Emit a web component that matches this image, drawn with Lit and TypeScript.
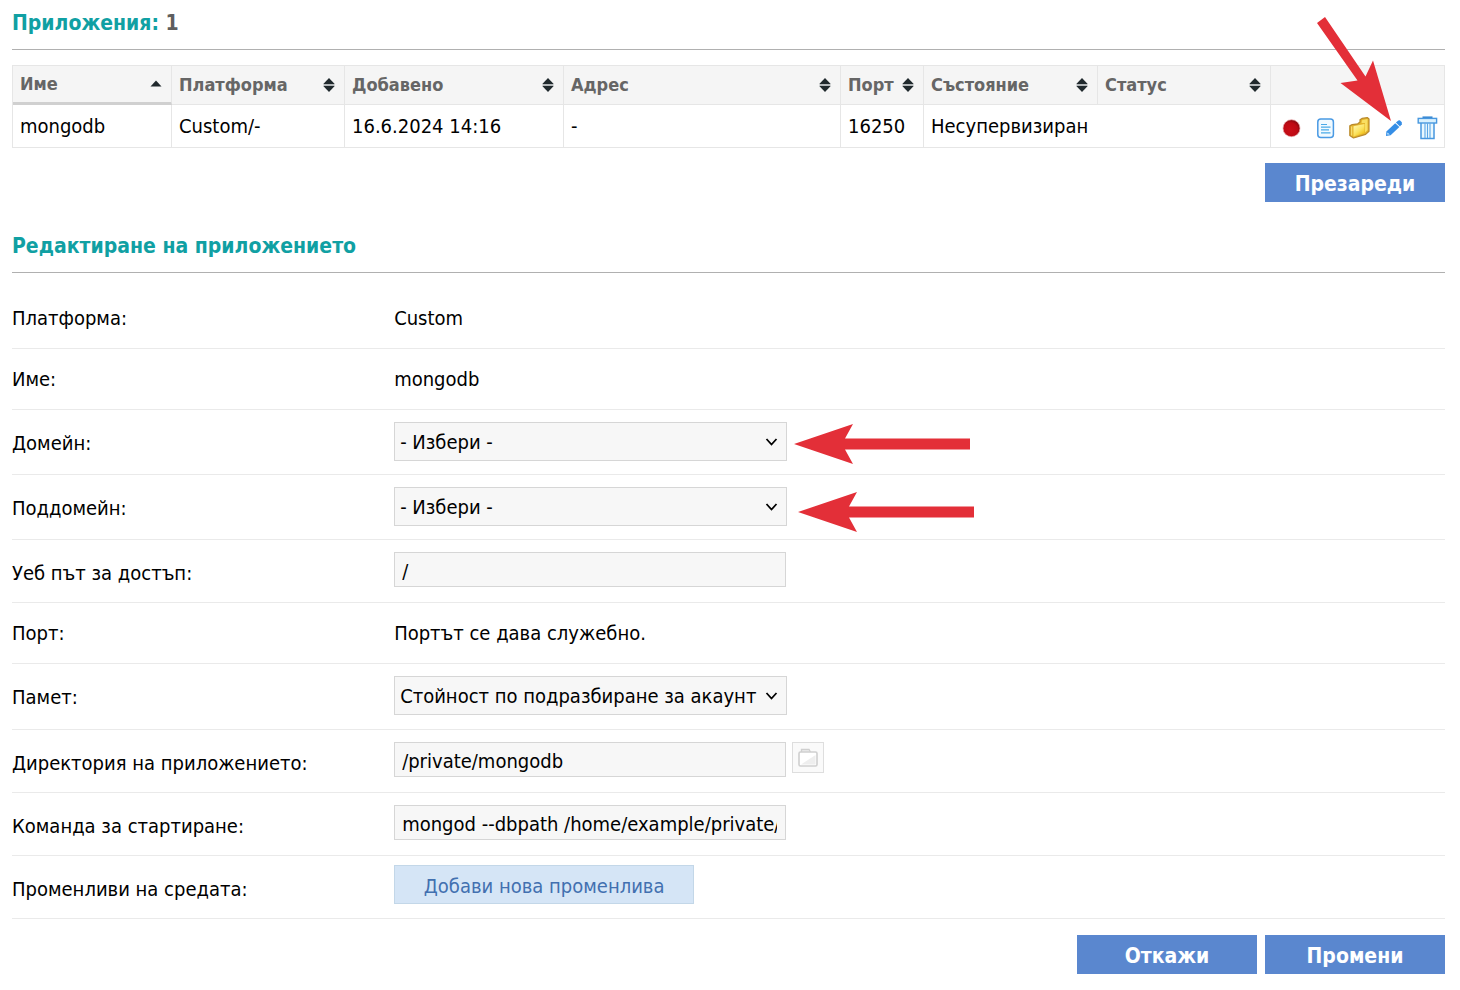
import { LitElement, html, svg, css, nothing } from "lit";
import { customElement, property } from "lit/decorators.js";

type SortState = "asc" | "both" | "none";

const COLUMNS: { label: string; width: number; sort: SortState }[] = [
  { label: "Име", width: 159, sort: "asc" },
  { label: "Платформа", width: 173, sort: "both" },
  { label: "Добавено", width: 219, sort: "both" },
  { label: "Адрес", width: 277, sort: "both" },
  { label: "Порт", width: 83, sort: "both" },
  { label: "Състояние", width: 174, sort: "both" },
  { label: "Статус", width: 173, sort: "both" },
];

/* Small sort marker in a table header. */
@customElement("sort-mark")
export class SortMark extends LitElement {
  @property() state: SortState = "both";

  static styles = css`
    :host { display: block; flex: none; }
    .mark { display: block; }
  `;

  render() {
    return html`<svg class="mark" width="12" height="14" viewBox="0 0 12 14" aria-hidden="true">
      ${this.state === "asc"
        ? svg`<path d="M0.5 9.5 6 3.5 11.5 9.5Z" fill="#20292d" />`
        : svg`<path d="M0.3 6 6 0 11.7 6Z" fill="#20292d" />
            <path d="M0.3 8 6 14 11.7 8Z" fill="#20292d" />
            <path d="M0.5 6H11.5V8H0.5Z" fill="#b4b8ba" />`}
    </svg>`;
  }
}

/* Red pointer drawn over the page; its tip lies at the box's left edge or lower right corner. */
@customElement("red-arrow")
export class RedArrow extends LitElement {
  @property() direction: "left" | "down" = "left";

  static styles = css`
    :host { display: block; pointer-events: none; }
    .arrow { display: block; fill: #e32f38; }
  `;

  render() {
    return this.direction === "left"
      ? html`<svg class="arrow" width="178" height="42" viewBox="0 0 178 42" aria-hidden="true">
          <path d="M0 21 59 1 51 15.5H176V26.5H51L59 41Z" />
        </svg>`
      : html`<svg class="arrow" width="76" height="106" viewBox="0 0 76 106" aria-hidden="true">
          <path d="M75 105 24.5 67 41.5 64.5 1 7 9 1 49.5 60.5 57 44.5Z" />
        </svg>`;
  }
}

@customElement("app-root")
export class AppRoot extends LitElement {
  static styles = css`
    :host {
      display: block;
      box-sizing: border-box;
      padding: 9px 15px 16px 12px;
      background: #fff;
      color: #000;
      font: 20px/28px "DejaVu Sans Condensed", "Noto Sans", sans-serif;
    }
    * { box-sizing: border-box; }
    .title {
      margin: 0;
      padding-bottom: 12px;
      border-bottom: 1px solid #b0b0b0;
      color: #10a0a3;
      font-size: 21px;
      line-height: 28px;
      font-weight: 700;
    }
    .count { color: #5e5e5e; }

    .apps {
      width: 100%;
      margin-top: 15px;
      border-collapse: separate;
      border-spacing: 0;
      border: 1px solid #e6e6e6;
      border-width: 1px 0 0 1px;
      table-layout: fixed;
    }
    .head, .cell {
      padding: 0 9px 0 7px;
      border: 1px solid #e6e6e6;
      border-width: 0 1px 1px 0;
      text-align: left;
      white-space: nowrap;
    }
    .head {
      height: 39px;
      background: #f5f5f5;
      color: #666;
      font-size: 18px;
      line-height: 24px;
      font-weight: 700;
    }
    .head.sorted { border-bottom: 3px solid #d0d0d0; }
    .headline { display: flex; align-items: center; justify-content: space-between; }
    .cell { height: 43px; }
    .tools-cell { padding: 4px 0 0 3px; }
    .tools { display: grid; grid-template-columns: repeat(5, 1fr); align-items: center; justify-items: center; }
    .tool {
      position: relative;
      display: block;
      padding: 0;
      border: 0;
      background: none;
      cursor: pointer;
    }
    .icon { display: block; }
    .point-edit { position: absolute; right: 12px; bottom: 18px; }

    .bar { display: flex; justify-content: flex-end; gap: 8px; }
    .bar.reload { padding: 15px 0 30px; }
    .bar.submit { padding-top: 16px; }
    .button {
      width: 180px;
      height: 39px;
      padding: 2px 0 0;
      border: 0;
      border-radius: 0;
      background: #5a87cf;
      color: #fff;
      font: inherit;
      font-size: 21px;
      font-weight: 700;
      cursor: pointer;
    }

    .form { margin: 0; padding-top: 15px; }
    .row {
      display: grid;
      grid-template-columns: 4fr 11fr;
      align-items: start;
      padding: 12px 0 15px;
      border-bottom: 1px solid #eaeaea;
    }
    .row.text { padding: 16px 0; }
    .row.pick { padding-bottom: 13px; }
    .row.pick.tall { padding-bottom: 14px; }
    .row.action { padding: 9px 0 14px; }
    .label { padding-top: 8px; line-height: 27px; }
    .row.text .label { padding-top: 0; line-height: 28px; }
    .row.action .label { padding-top: 11px; }
    .field { display: flex; align-items: flex-start; gap: 6px; }
    .picker, .box { position: relative; width: 393px; max-width: 100%; }
    .select, .input {
      display: block;
      width: 100%;
      margin: 0;
      border: 1px solid #d6d6d6;
      border-radius: 0;
      background: #f7f7f7;
      color: #000;
      font: inherit;
    }
    .select { height: 39px; padding: 0 26px 0 5px; appearance: none; }
    .input { height: 35px; padding: 2px 8px 0 7px; }
    .box { width: 392px; }
    .chevron { position: absolute; right: 9px; top: 15px; pointer-events: none; }
    .point-field { position: absolute; left: 400px; top: 1px; }
    .point-field.low { left: 404px; top: 4px; }
    .browse {
      width: 32px;
      height: 31px;
      padding: 0 0 0 5px;
      border: 1px solid #dedede;
      background: #fafafa;
    }
    .add {
      width: 300px;
      height: 39px;
      padding: 3px 0 0;
      border: 1px solid #c3d7e8;
      background: #d5e5f6;
      color: #4270b0;
      font: inherit;
      cursor: pointer;
    }
  `;

  private select(id: string, text: string, arrow: "" | "high" | "low" = "") {
    return html`<span class="picker">
      <select class="select" id=${id} name=${id}><option>${text}</option></select>
      <svg class="chevron" width="13" height="10" viewBox="0 0 13 10" aria-hidden="true">
        <path d="M1.5 2 6.5 7.5 11.5 2" fill="none" stroke="#000" stroke-width="1.8" />
      </svg>
      ${arrow ? html`<red-arrow class="point-field ${arrow}" direction="left"></red-arrow>` : nothing}
    </span>`;
  }

  private input(id: string, value: string) {
    return html`<span class="box"><input class="input" type="text" id=${id} name=${id} .value=${value} /></span>`;
  }

  private row(kind: string, id: string, label: string, content: unknown) {
    return html`<div class="row ${kind}">
      ${kind === "text"
        ? html`<span class="label">${label}</span>`
        : html`<label class="label" for=${id}>${label}</label>`}
      <div class="field">${content}</div>
    </div>`;
  }

  private tools() {
    return html`<div class="tools">
      <button class="tool" type="button" aria-label="Състояние">
        <svg class="icon" width="20" height="24" viewBox="0 0 20 24">
          <defs>
            <radialGradient id="lamp" cx=".42" cy=".6" r=".6">
              <stop offset="0" stop-color="#cb0e18" />
              <stop offset=".7" stop-color="#bd0a14" />
              <stop offset="1" stop-color="#850a10" />
            </radialGradient>
          </defs>
          <circle cx="10.5" cy="12.2" r="8.5" fill="url(#lamp)" stroke="#eba9ad" stroke-width=".7" />
        </svg>
      </button>
      <button class="tool" type="button" aria-label="Дневник">
        <svg class="icon" width="20" height="24" viewBox="0 0 20 24">
          <rect x="2.8" y="3" width="15.6" height="18.4" rx="3" fill="#f1faff" stroke="#4a9ae4" stroke-width="1.5" />
          <path d="M6 8.5h6M6 11.2h9.5M6 13.9h8M6 16.8h9.5" stroke="#4aaae8" stroke-width="1.2" />
        </svg>
      </button>
      <button class="tool" type="button" aria-label="Файлове">
        <svg class="icon" width="22" height="24" viewBox="0 0 22 24">
          <defs>
            <linearGradient id="folder" x1="0" y1="0" x2=".7" y2="1">
              <stop offset="0" stop-color="#fff9b8" />
              <stop offset=".6" stop-color="#fbe360" />
              <stop offset="1" stop-color="#f0bd10" />
            </linearGradient>
          </defs>
          <path d="M1.8 19.5V9.8L4.2 8.6 9.8 7.8 12 6V3.8L14 2.4 19.5 1.6 21 3V15.2L17.6 18.4 5.5 22Z" fill="#e5b52c" stroke="#b98a2c" stroke-width="1.2" stroke-linejoin="round" />
          <path d="M13.5 7 14 4.2 19.5 3V14L17 16.5V7Z" fill="#f9df62" />
          <path d="M5.5 10.2 16.5 8V17L5.5 20.6Z" fill="url(#folder)" />
          <path d="M3.6 10.6V19.6" stroke="#f7dc6c" stroke-width="1.2" />
        </svg>
      </button>
      <button class="tool" type="button" aria-label="Редактиране">
        <svg class="icon" width="22" height="24" viewBox="0 0 22 24">
          <path d="M4 20 4.4 15.6 13.2 7.2 17.4 11 8.6 19.2Z" fill="#358ee6" />
          <path d="M13.9 6.6 16.3 4.4 17.8 4.3 19.8 6.3V8.3L18 10.4Z" fill="#358ee6" />
          <path d="M5.2 18.6 5.4 16.6 7.8 18.4Z" fill="#cceeff" />
        </svg>
        <red-arrow class="point-edit" direction="down"></red-arrow>
      </button>
      <button class="tool" type="button" aria-label="Изтриване">
        <svg class="icon" width="22" height="26" viewBox="0 0 22 26">
          <path d="M5 8V23.5H18V8" fill="#eaf8fe" stroke="#4797df" stroke-width="1.5" />
          <path d="M9 8.5V23M11.5 8.5V23M14 8.5V23" stroke="#5ba6e6" stroke-width="1.1" />
          <rect x="2.2" y="3.4" width="18.4" height="4.6" fill="#d9f1fe" stroke="#4797df" stroke-width="1.4" />
          <path d="M6.5 2.2H16.5" stroke="#3c8bd4" stroke-width="1.6" />
        </svg>
      </button>
    </div>`;
  }

  render() {
    return html`
      <h2 class="title">Приложения: <span class="count">1</span></h2>
      <table class="apps">
        <colgroup>
          ${COLUMNS.map((c) => html`<col width=${c.width} />`)}
          <col width="174" />
        </colgroup>
        <thead>
          <tr>
            ${COLUMNS.map(
              (c) => html`<th class="head ${c.sort === "asc" ? "sorted" : ""}" scope="col">
                <div class="headline"><span>${c.label}</span><sort-mark .state=${c.sort}></sort-mark></div>
              </th>`
            )}
            <th class="head"></th>
          </tr>
        </thead>
        <tbody>
          <tr>
            <td class="cell">mongodb</td>
            <td class="cell">Custom/-</td>
            <td class="cell">16.6.2024 14:16</td>
            <td class="cell">-</td>
            <td class="cell">16250</td>
            <td class="cell" colspan="2">Несупервизиран</td>
            <td class="cell tools-cell">${this.tools()}</td>
          </tr>
        </tbody>
      </table>
      <div class="bar reload"><button class="button" type="button">Презареди</button></div>

      <h2 class="title">Редактиране на приложението</h2>
      <form class="form" @submit=${(e: Event) => e.preventDefault()}>
        ${this.row("text", "", "Платформа:", "Custom")}
        ${this.row("text", "", "Име:", "mongodb")}
        ${this.row("pick", "domain", "Домейн:", this.select("domain", "- Избери -", "high"))}
        ${this.row("pick", "subdomain", "Поддомейн:", this.select("subdomain", "- Избери -", "low"))}
        ${this.row("entry", "path", "Уеб път за достъп:", this.input("path", "/"))}
        ${this.row("text", "", "Порт:", "Портът се дава служебно.")}
        ${this.row("pick tall", "memory", "Памет:", this.select("memory", "Стойност по подразбиране за акаунт"))}
        ${this.row("entry", "directory", "Директория на приложението:", html`${this.input("directory", "/private/mongodb")}
          <button class="tool browse" type="button" aria-label="Избор на директория">
            <svg class="icon" width="20" height="20" viewBox="0 0 20 20">
              <path d="M3.5 4V1.5H11L12.5 4" fill="#eee" stroke="#cfcfcf" stroke-width="1.4" />
              <rect x="1" y="4" width="18" height="14" rx="1.5" fill="#fff" stroke="#cfcfcf" stroke-width="1.6" />
              <path d="M3 16.5 17.5 7V16.5Z" fill="#eee" />
            </svg>
          </button>`)}
        ${this.row("entry", "command", "Команда за стартиране:", this.input("command", "mongod --dbpath /home/example/private/mongodb"))}
        ${this.row("action", "variable", "Променливи на средата:", html`<button class="add" id="variable" type="button">Добави нова променлива</button>`)}
        <div class="bar submit">
          <button class="button" type="button">Откажи</button>
          <button class="button" type="submit">Промени</button>
        </div>
      </form>
    `;
  }
}
